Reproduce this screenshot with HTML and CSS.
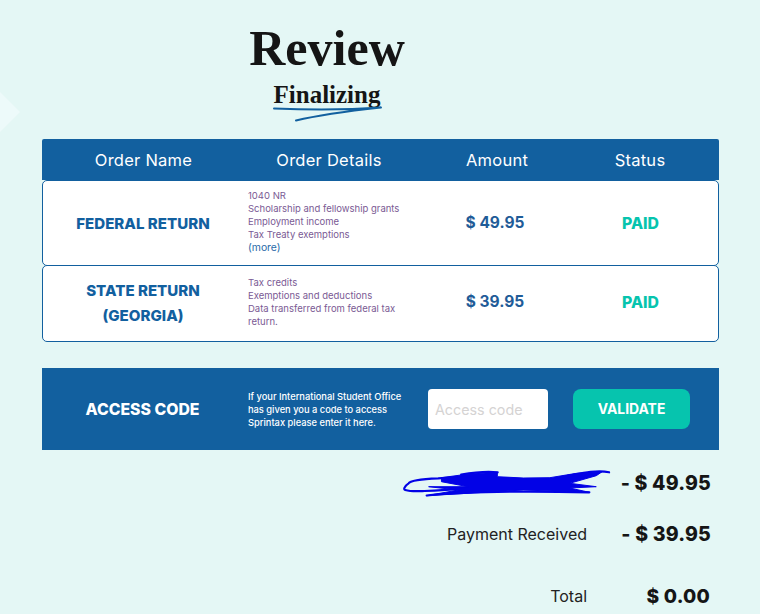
FILE: index.html
```html
<!DOCTYPE html>
<html lang="en">
<head>
<meta charset="utf-8">
<title>Review</title>
<link rel="stylesheet" href="styles.css">
</head>
<body>
<svg class="diamond" width="22" height="44" viewBox="0 0 22 44"><path d="M0 2L20 22L0 42Z" fill="#edfafa"/></svg>
<main class="page">
  <header class="head">
    <h1 class="title">Review</h1>
    <h2 class="subtitle">Finalizing
      <svg class="underline" width="112" height="18" viewBox="0 0 112 18"><path d="M1 2.500C40 4 80 3.500 108 1.500C85 4 50 8 23 14.500" fill="none" stroke="#12609f" stroke-width="2" stroke-linecap="round" stroke-linejoin="round"/></svg>
    </h2>
  </header>
  <section class="orders">
    <div class="grid thead">
      <div>Order Name</div>
      <div>Order Details</div>
      <div>Amount</div>
      <div>Status</div>
    </div>
    <div class="grid row row-a">
      <div class="name">FEDERAL RETURN</div>
      <div class="details">1040 NR<br>Scholarship and fellowship grants<br>Employment income<br>Tax Treaty exemptions<br><a class="more">(more)</a></div>
      <div class="amount">$ 49.95</div>
      <div class="paid">PAID</div>
    </div>
    <div class="grid row row-b">
      <div class="name">STATE RETURN<br>(GEORGIA)</div>
      <div class="details">Tax credits<br>Exemptions and deductions<br>Data transferred from federal tax<br>return.</div>
      <div class="amount">$ 39.95</div>
      <div class="paid">PAID</div>
    </div>
  </section>
  <section class="access">
    <div class="access-label">ACCESS CODE</div>
    <p class="access-text">If your International Student Office has given you a code to access Sprintax please enter it here.</p>
    <input class="code" type="text" placeholder="Access code">
    <button class="validate" type="button">VALIDATE</button>
  </section>
  <section class="summary">
    <div class="line line-1">
      <span class="sum">- $ 49.95</span>
      <svg class="scribble" width="212" height="30" viewBox="0 0 215 30" preserveAspectRatio="none"><path d="M210 4.300C200 2 190 3 150 12C130 12 110 10 90 10.300C70 9 50 9 36.700 10.300C20 11 8 13 6.700 15.300C1 19 2 22 3.300 22C10 24 20 23 23 23C50 22 70 20 90 18.700M25 27.500C70 23 130 23 190 24.300M60 6.500C75 4 90 3.500 97 4.300" fill="none" stroke="#0202e6" stroke-width="2.200" stroke-linecap="round"/><path d="M40 9.700L65 6.300L96.700 4.300L96.700 8.700L123 10L150 9.700L177 5.300L203 3.700L197 7.700L170 15.300L197 18.700L170 20L190 24.300L123 22L25 27.700L57 22L27 18.700L67 18.700L40 13.700Z" fill="#0202e6" stroke="#0202e6" stroke-width="1" stroke-linejoin="round"/></svg>
    </div>
    <div class="line line-2"><span class="label">Payment Received</span><span class="sum">- $ 39.95</span></div>
    <div class="line line-3"><span class="label">Total</span><span class="sum total">$ 0.00</span></div>
  </section>
</main>
</body>
</html>
```
FILE: styles.css
```css
* { box-sizing: border-box; }
html, body { margin: 0; height: 100%; }
body {
  background: #e4f7f5;
  font-family: "Inter", "Liberation Sans", sans-serif;
  overflow: hidden;
  position: relative;
  width: 760px;
  height: 614px;
}
.diamond { position: absolute; left: 0; top: 90px; }
.page { padding: 0 41px 0 42px; }
.head { width: 570px; text-align: center; padding-top: 21px; height: 139px; }
.title {
  margin: 0;
  font: 700 50px/54px "Liberation Serif", serif;
  color: #151515;
}
.subtitle {
  position: relative;
  display: inline-block;
  margin: 2px 0 0;
  font: 700 25px/36px "Liberation Serif", serif;
  color: #151515;
}
.underline { position: absolute; left: -1px; top: 29px; }
.grid { display: grid; grid-template-columns: 203px 168px 168px 118px; padding-right: 20px; align-items: center; text-align: center; }
.thead {
  height: 41px;
  background: #12609f;
  color: #fff;
  font-size: 16.500px;
  font-weight: 400;
  letter-spacing: 0.250px;
  border-radius: 2px 2px 0 0;
}
.row { background: #fff; border: 1px solid #12609f; border-radius: 5px; }
.row-a { height: 86px; padding-bottom: 2px; }
.row-b { height: 77px; margin-top: -1px; padding-bottom: 4px; }
.name { font-size: 15.100px; line-height: 25px; font-weight: 800; color: #12609f; margin-left: -3px; margin-top: 2px; }
.details { font-size: 9.500px; line-height: 13px; color: #7a5a94; text-align: left; padding-left: 2px; white-space: nowrap; }
.row-a .details { margin-bottom: 2px; }
.more { color: #2a6aa8; font-size: 10.400px; }
.amount { font-size: 15.500px; font-weight: 700; color: #1f5c98; margin-left: -6px; }
.paid { font-size: 15.800px; font-weight: 800; color: #06c4ae; margin-right: 1px; margin-top: 1px; }
.row-a .paid { margin-top: 3px; }
.access {
  margin-top: 26px;
  height: 82px;
  background: #12609f;
  display: grid;
  grid-template-columns: 203px 183px 120px 117px;
  align-items: center;
  color: #fff;
}
.access-label { text-align: center; font-size: 15.800px; font-weight: 800; margin-left: -2px; }
.access-text { margin: 0; padding-left: 3px; font-size: 9.300px; line-height: 13px; width: 172px; font-weight: 500; }
.code {
  width: 120px;
  height: 40px;
  border: 0;
  border-radius: 4px;
  background: #fff;
  padding: 0 7px;
  font: 400 14.300px "Inter", sans-serif;
}
.code::placeholder { color: #d5d3d3; opacity: 1; }
.validate {
  margin-left: 25px;
  width: 117px;
  height: 40px;
  border: 0;
  border-radius: 8px;
  background: #06c4ae;
  color: #fff;
  font: 700 13.900px "Inter", sans-serif;
}
.summary { color: #151515; padding-right: 8px; }
.line { position: relative; display: flex; justify-content: flex-end; align-items: center; }
.line-1 { margin-top: 22px; height: 22px; }
.line-2 { margin-top: 29px; height: 22px; }
.line-3 { margin-top: 39px; height: 24px; }
.label { font-size: 16px; color: #222; }
.sum { width: 124px; text-align: right; font-size: 19.500px; font-weight: 800; letter-spacing: 0.200px; }
.sum.total { font-size: 19.200px; padding-right: 1px; }
.scribble { position: absolute; left: 360px; top: -4px; }
```
